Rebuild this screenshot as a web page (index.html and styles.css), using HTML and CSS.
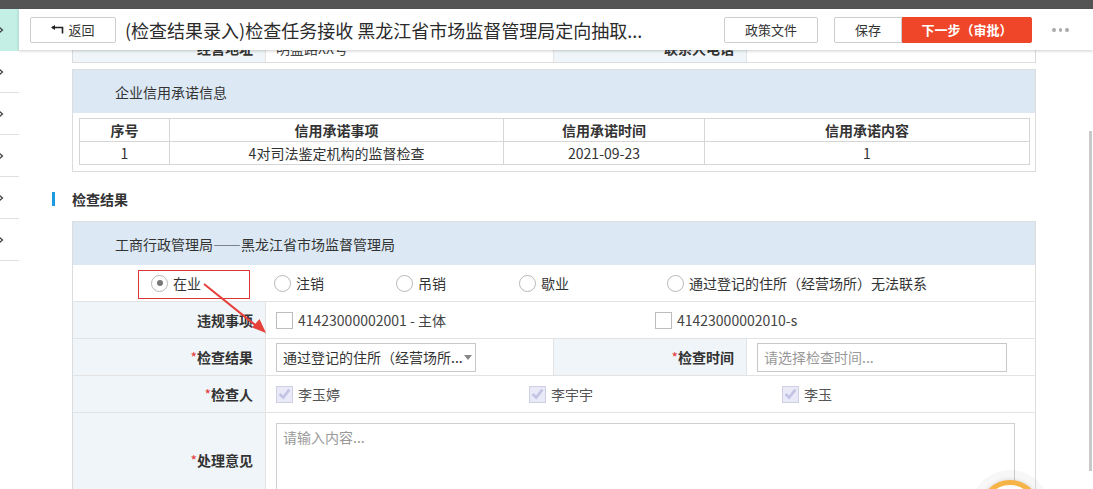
FILE: index.html
```html
<!DOCTYPE html>
<html lang="zh-CN">
<head>
<meta charset="utf-8">
<title>检查任务接收</title>
<link rel="stylesheet" href="styles.css">
</head>
<body>
<div class="topbar"></div>
<div class="app">
  <aside class="sidebar">
    <div class="nav-item active"><svg class="chev" viewBox="0 0 6 8" width="6" height="8"><path d="M0.5 0.5 L4.5 4 L0.5 7.5" /></svg></div>
    <div class="nav-item"><svg class="chev" viewBox="0 0 6 8" width="6" height="8"><path d="M0.5 0.5 L4.5 4 L0.5 7.5" /></svg></div>
    <div class="nav-item"><svg class="chev" viewBox="0 0 6 8" width="6" height="8"><path d="M0.5 0.5 L4.5 4 L0.5 7.5" /></svg></div>
    <div class="nav-item"><svg class="chev" viewBox="0 0 6 8" width="6" height="8"><path d="M0.5 0.5 L4.5 4 L0.5 7.5" /></svg></div>
    <div class="nav-item"><svg class="chev" viewBox="0 0 6 8" width="6" height="8"><path d="M0.5 0.5 L4.5 4 L0.5 7.5" /></svg></div>
    <div class="nav-item"><svg class="chev" viewBox="0 0 6 8" width="6" height="8"><path d="M0.5 0.5 L4.5 4 L0.5 7.5" /></svg></div>
  </aside>
  <main class="main">
    <header class="header">
      <button class="btn back"><svg class="back-icon" viewBox="0 0 13 9" width="13" height="9"><path d="M1 2.5 H11.5 V8.5" fill="none" stroke="#222" stroke-width="1.6"/><path d="M0 2.5 L4 0 L4 5 Z" fill="#222"/></svg>返回</button>
      <h1 class="title">(检查结果录入)检查任务接收 黑龙江省市场监督管理局定向抽取...</h1>
      <div class="actions">
        <button class="btn policy">政策文件</button>
        <div class="btn-group">
          <button class="btn save">保存</button>
          <button class="btn primary">下一步（审批）</button>
        </div>
        <span class="more"><i></i><i></i><i></i></span>
      </div>
    </header>

    <div class="content">
      <div class="box tail">
        <div class="row short">
          <div class="label">经营地址</div>
          <div class="value half">明盛路XX号</div>
          <div class="label mid">联系人电话</div>
          <div class="value"></div>
        </div>
      </div>

      <div class="box credit-box">
        <div class="box-head">企业信用承诺信息</div>
        <table class="credit">
          <colgroup><col class="c1"><col class="c2"><col class="c3"><col class="c4"></colgroup>
          <thead>
            <tr><th>序号</th><th>信用承诺事项</th><th>信用承诺时间</th><th>信用承诺内容</th></tr>
          </thead>
          <tbody>
            <tr><td>1</td><td>4对司法鉴定机构的监督检查</td><td>2021-09-23</td><td>1</td></tr>
          </tbody>
        </table>
      </div>

      <div class="section-title">检查结果</div>

      <div class="box result-box">
        <div class="box-head">工商行政管理局——黑龙江省市场监督管理局</div>
        <div class="row radios">
          <label class="radio"><span class="dot checked"></span>在业</label>
          <label class="radio"><span class="dot"></span>注销</label>
          <label class="radio"><span class="dot"></span>吊销</label>
          <label class="radio"><span class="dot"></span>歇业</label>
          <label class="radio"><span class="dot"></span>通过登记的住所（经营场所）无法联系</label>
        </div>
        <div class="row">
          <div class="label">违规事项</div>
          <div class="value cols2">
            <label class="check"><span class="box-ck"></span>41423000002001 - 主体</label>
            <label class="check"><span class="box-ck"></span>41423000002010-s</label>
          </div>
        </div>
        <div class="row">
          <div class="label"><em>*</em>检查结果</div>
          <div class="value half">
            <div class="select">通过登记的住所（经营场所...<span class="caret"></span></div>
          </div>
          <div class="label mid"><em>*</em>检查时间</div>
          <div class="value">
            <div class="input placeholder">请选择检查时间...</div>
          </div>
        </div>
        <div class="row">
          <div class="label"><em>*</em>检查人</div>
          <div class="value cols3">
            <label class="check muted"><span class="box-ck on"><svg viewBox="0 0 17 17" width="15" height="15"><path d="M3 8 L7 12 L14 3" fill="none" stroke="#c3c3e6" stroke-width="3"/></svg></span>李玉婷</label>
            <label class="check muted"><span class="box-ck on"><svg viewBox="0 0 17 17" width="15" height="15"><path d="M3 8 L7 12 L14 3" fill="none" stroke="#c3c3e6" stroke-width="3"/></svg></span>李宇宇</label>
            <label class="check muted"><span class="box-ck on"><svg viewBox="0 0 17 17" width="15" height="15"><path d="M3 8 L7 12 L14 3" fill="none" stroke="#c3c3e6" stroke-width="3"/></svg></span>李玉</label>
          </div>
        </div>
        <div class="row tall">
          <div class="label"><em>*</em>处理意见</div>
          <div class="value top">
            <div class="textarea placeholder">请输入内容...</div>
          </div>
        </div>
      </div>
    </div>
  </main>
</div>

<svg class="annot" width="1093" height="489" viewBox="0 0 1093 489">
  <rect x="138.5" y="270.5" width="111" height="28" fill="none" stroke="#d9363a" stroke-width="1"/>
  <line x1="204" y1="284" x2="259" y2="328" stroke="#e6403a" stroke-width="2"/>
  <path d="M266 333 L252 327.5 L259.5 319 Z" fill="#e6403a"/>
</svg>
<div class="scrollbar"></div>
<div class="float-btn"><div class="ring"></div></div>
</body>
</html>
```

FILE: styles.css
```css
* { box-sizing: border-box; }
html, body { margin: 0; padding: 0; }
body {
  width: 1093px;
  height: 489px;
  overflow: hidden;
  position: relative;
  background: #fff;
  color: #333;
  font-family: "Noto Sans CJK SC", "Noto Sans", sans-serif;
  font-size: 14px;
}
.topbar { height: 9px; background: #545454; }
.app { display: flex; height: 480px; }

.sidebar { width: 19px; flex-shrink: 0; background: #fff; overflow: hidden; }
.nav-item {
  height: 42px;
  border-bottom: 1px solid #e0e0e0;
  display: flex;
  align-items: center;
}
.nav-item.active { background: #c3efe5; border-bottom: none; }
.chev { margin-left: -2px; }
.chev path { fill: none; stroke: #444; stroke-width: 1.3; }

.main { flex: 1; display: flex; flex-direction: column; min-width: 0; }
.header {
  height: 41px;
  flex-shrink: 0;
  display: flex;
  align-items: center;
  padding: 0 24px 0 11px;
  background: #fff;
  box-shadow: 0 1px 3px rgba(0,0,0,0.2);
  position: relative;
  z-index: 2;
}
.btn {
  height: 26px;
  border: 1px solid #cdcdcd;
  border-radius: 2px;
  background: #fff;
  font-family: inherit;
  font-size: 13px;
  color: #333;
  padding: 0;
  display: inline-flex;
  align-items: center;
  justify-content: center;
}
.back { width: 86px; gap: 3px; }
.back-icon { margin-right: 1px; }
.title {
  flex: 1;
  margin: 0 0 0 9px;
  font-size: 18px;
  font-weight: normal;
  color: #2b2b2b;
  white-space: nowrap;
  overflow: hidden;
}
.actions { display: flex; align-items: center; }
.policy { width: 94px; }
.btn-group { display: flex; margin-left: 16px; }
.save { width: 68px; border-radius: 2px 0 0 2px; }
.primary {
  width: 130px;
  background: #ef4629;
  border-color: #ef4629;
  color: #fff;
  border-radius: 0 2px 2px 0;
  font-weight: bold;
}
.more { display: flex; gap: 3px; margin-left: 20px; width: 17px; }
.more i { width: 4px; height: 4px; border-radius: 50%; background: #aaa; display: block; }

.content { flex: 1; overflow: hidden; padding: 0 57px 0 53px; }

.box { border: 1px solid #dcdcdc; background: #fff; }
.box.tail { border-top: none; margin-top: -16px; }
.box-head {
  height: 43px;
  background: #dce9f5;
  display: flex;
  align-items: center;
  padding-left: 42px;
  color: #333;
}

.credit-box { margin-top: 6px; padding-bottom: 6px; }
.credit { border-collapse: collapse; width: 951px; margin: 5px 0 0 6px; }
.credit .c1 { width: 90px; }
.credit .c2 { width: 334px; }
.credit .c3 { width: 201px; }
.credit th, .credit td {
  border: 1px solid #d6d6d6;
  height: 23px;
  padding: 0;
  text-align: center;
  font-size: 14px;
  line-height: 20px;
  color: #333;
}
.credit th { font-weight: bold; }

.section-title {
  display: flex;
  align-items: center;
  height: 18px;
  margin: 18px 0 13px -20px;
  font-weight: bold;
  font-size: 14px;
}
.section-title::before {
  content: "";
  width: 3px;
  height: 14px;
  background: #1d9be2;
  margin-right: 17px;
}

.row { display: flex; min-height: 37px; border-bottom: 1px solid #e3e3e3; }
.row:last-child { border-bottom: none; }
.row.short { min-height: 28px; }
.label {
  width: 193px;
  flex-shrink: 0;
  background: #eff5f8;
  border-right: 1px solid #e3e3e3;
  display: flex;
  align-items: center;
  justify-content: flex-end;
  padding-right: 12px;
  font-weight: bold;
  color: #333;
}
.label em { font-style: normal; color: #e5393b; font-weight: normal; }
.label.mid { width: 194px; border-left: 1px solid #e3e3e3; }
.value { flex: 1; display: flex; align-items: center; padding: 0 10px; color: #444; }
.value.half { flex: 0 0 287px; }
.value.top { align-items: flex-start; padding-top: 10px; }
.row.tall { min-height: 93px; }

.radios { display: grid; grid-template-columns: 123px 122px 123px 148px auto; padding-left: 78px; align-items: center; }
.radio { display: flex; align-items: center; color: #333; }
.dot {
  width: 17px; height: 17px;
  border: 1px solid #b8b8b8;
  border-radius: 50%;
  margin-right: 5px;
  display: flex; align-items: center; justify-content: center;
  background: #fff;
}
.dot.checked::after { content: ""; width: 6px; height: 6px; border-radius: 50%; background: #777; }

.cols2 { display: grid; grid-template-columns: 379px 379px; }
.cols3 { display: grid; grid-template-columns: 253px 253px 253px; }
.check { display: flex; align-items: center; color: #444; }
.check.muted { color: #555; }
.box-ck {
  width: 17px; height: 17px;
  border: 1px solid #bdbdbd;
  background: #fff;
  margin-right: 5px;
  display: flex; align-items: center; justify-content: center;
}
.box-ck.on { background: #e9e9f7; border-color: #cfcfe3; }

.select {
  width: 200px; height: 29px;
  border: 1px solid #c8c8c8;
  padding-left: 6px;
  display: flex; align-items: center;
  color: #333;
  position: relative;
  white-space: nowrap;
}
.caret {
  margin-left: 1px;
  width: 0; height: 0;
  border-left: 4px solid transparent;
  border-right: 4px solid transparent;
  border-top: 5px solid #888;
}
.input {
  width: 250px; height: 29px;
  border: 1px solid #c8c8c8;
  padding-left: 6px;
  display: flex; align-items: center;
}
.placeholder { color: #999; }
.textarea {
  width: 739px; height: 76px;
  border: 1px solid #d0d0d0;
  padding: 3px 6px;
}

.annot { position: absolute; left: 0; top: 0; pointer-events: none; }
.scrollbar { position: absolute; left: 1089px; top: 131px; width: 3px; height: 340px; background: #c9c9c9; }
.float-btn {
  position: absolute; left: 970px; top: 470px;
  width: 80px; height: 80px; border-radius: 50%;
  background: rgba(0,0,0,0.03);
  display: flex; align-items: center; justify-content: center;
}
.float-btn .ring {
  width: 60px; height: 60px; border-radius: 50%;
  background: #fff;
  border: 5px solid #f6b446;
  box-shadow: 0 0 4px rgba(0,0,0,0.15);
}
```
